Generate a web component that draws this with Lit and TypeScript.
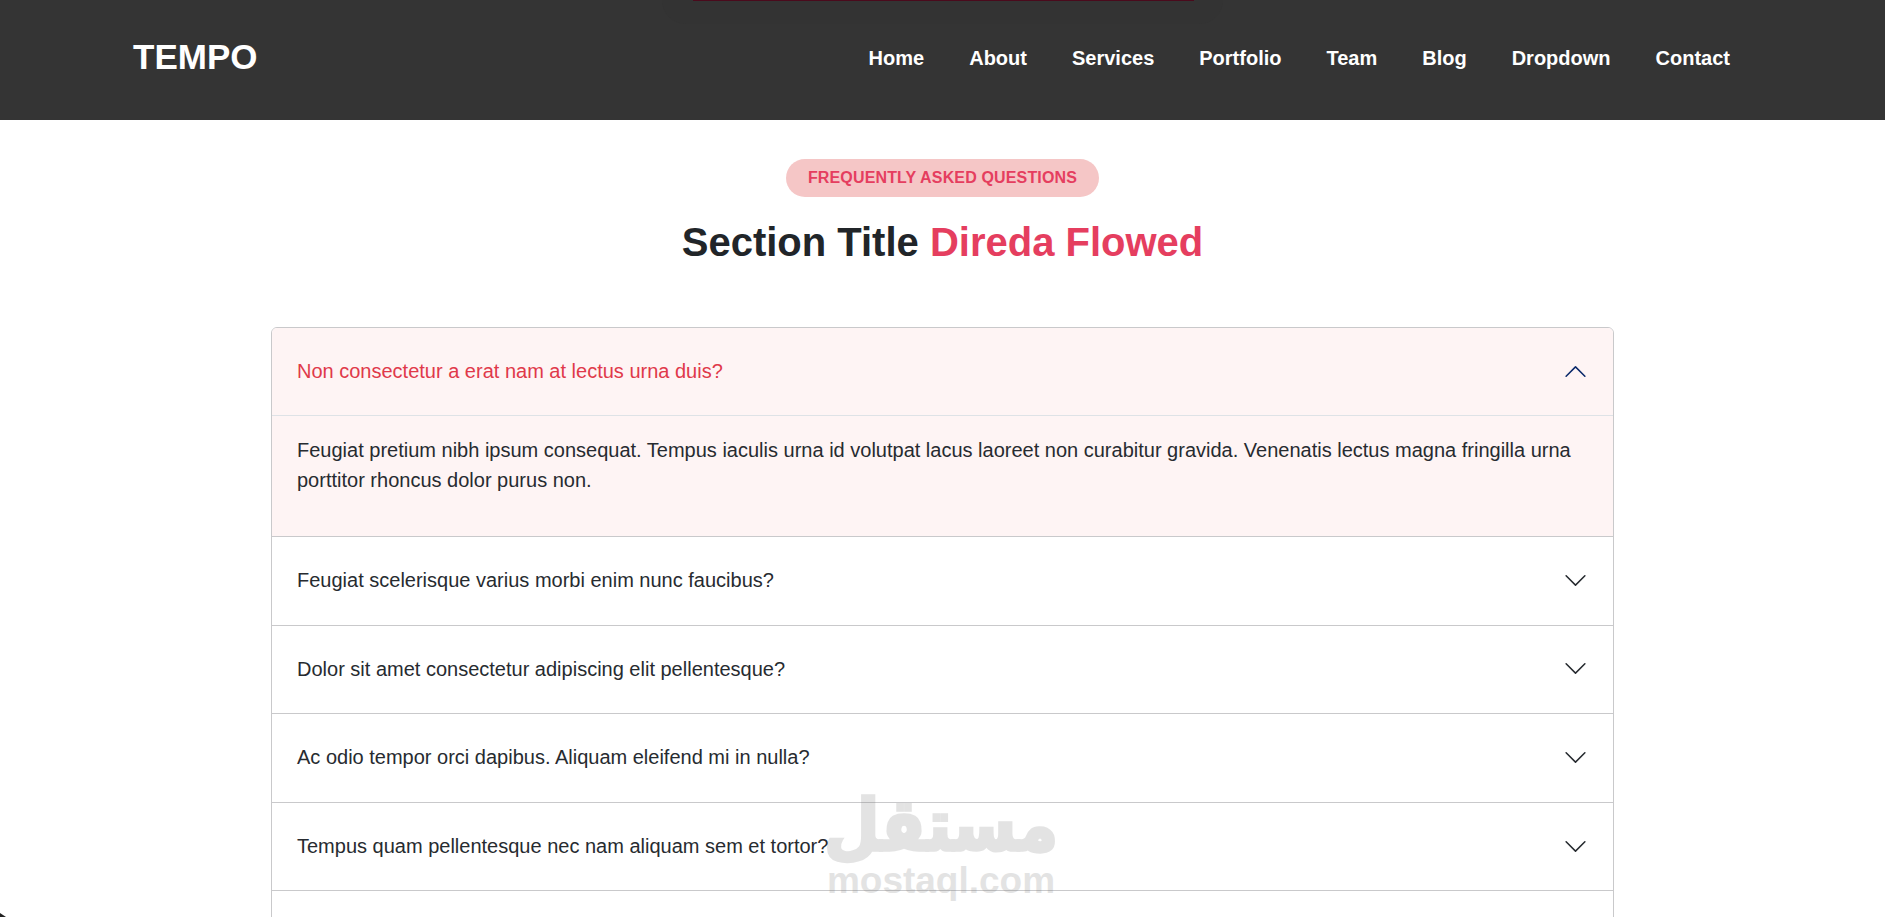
import { css, html, LitElement } from "lit";
import { customElement } from "lit/decorators.js";

const chevron = html`<svg class="chevron" viewBox="0 0 16 16" fill="currentColor">
	<path
		fill-rule="evenodd"
		d="M1.646 4.646a.5.5 0 0 1 .708 0L8 10.293l5.646-5.647a.5.5 0 0 1 .708.708l-6 6a.5.5 0 0 1-.708 0l-6-6a.5.5 0 0 1 0-.708z"
	/>
</svg>`;

const NAV = ["Home", "About", "Services", "Portfolio", "Team", "Blog", "Dropdown", "Contact"];

const QUESTIONS = [
	"Feugiat scelerisque varius morbi enim nunc faucibus?",
	"Dolor sit amet consectetur adipiscing elit pellentesque?",
	"Ac odio tempor orci dapibus. Aliquam eleifend mi in nulla?",
	"Tempus quam pellentesque nec nam aliquam sem et tortor?",
];

@customElement("app-root")
export class AppRoot extends LitElement {
	static override styles = css`
		:host {
			display: block;
			height: 100vh;
			overflow: hidden;
			position: relative;
			background: #fff;
			color: #272b30;
			font-family: "Liberation Sans", Arial, sans-serif;
			font-size: 20px;
		}

		.header {
			height: 120px;
			background: #343434;
			display: flex;
			align-items: center;
			justify-content: space-between;
			padding: 0 155px 4px 133px;
			box-sizing: border-box;
			position: relative;
		}

		.logo {
			font-size: 35px;
			font-weight: 700;
			color: #fff;
			margin-bottom: 3px;
		}

		.nav {
			display: flex;
			gap: 45px;
			font-size: 20px;
			font-weight: 700;
			color: #fff;
		}

		.top-strip {
			position: absolute;
			left: 693px;
			top: 0;
			width: 501px;
			height: 1px;
			background: #4a0a1c;
		}

		.top-shadow {
			position: absolute;
			left: 662px;
			top: 0;
			width: 561px;
			height: 24px;
			background: #333;
			border-radius: 0 0 24px 24px;
		}

		.section {
			display: flex;
			flex-direction: column;
			align-items: center;
			padding-top: 39px;
		}

		.badge {
			height: 38px;
			box-sizing: border-box;
			padding: 0 22px 1px;
			display: flex;
			align-items: center;
			border-radius: 19px;
			background: #f5c6c6;
			color: #e53e5f;
			font-size: 16px;
			font-weight: 700;
			letter-spacing: 0.15px;
		}

		.title {
			margin: 22px 0 0;
			font-size: 40px;
			line-height: 46px;
			font-weight: 700;
			color: #212529;
		}

		.title span {
			color: #e53e5f;
		}

		.accordion {
			width: 1343px;
			margin-top: 62px;
			box-sizing: border-box;
			border: 1px solid #c9c9cb;
			border-radius: 6px;
			overflow: hidden;
		}

		.question {
			height: 87px;
			display: flex;
			align-items: center;
			justify-content: space-between;
			padding: 0 25px;
		}

		.item {
			border-top: 1px solid #c9c9cb;
		}

		.item .question {
			height: 87.6px;
		}

		.open {
			background: #fef4f4;
		}

		.open .question {
			color: #e0394a;
			border-bottom: 1px solid #dee2e6;
		}

		.open .chevron {
			color: #0c2a6b;
			transform: rotate(180deg);
		}

		.answer {
			height: 120px;
			box-sizing: border-box;
			padding: 20px 25px 0;
			line-height: 29.5px;
		}

		.chevron {
			width: 25px;
			height: 25px;
			color: #272b30;
			flex: none;
			margin-bottom: 1px;
		}

		.watermark {
			position: absolute;
			left: 821px;
			top: 786px;
			width: 240px;
			display: flex;
			flex-direction: column;
			align-items: center;
			color: #777;
			opacity: 0.2;
			font-weight: 700;
			pointer-events: none;
		}

		.watermark .ar {
			font-family: "DejaVu Sans", sans-serif;
			font-size: 64px;
			line-height: 78px;
			-webkit-text-stroke: 3px #777;
			transform: scaleY(1.12);
		}

		.watermark .en {
			font-size: 37px;
			line-height: 34px;
		}

		.corner {
			position: absolute;
			left: 0;
			bottom: 0;
			width: 6px;
			height: 4px;
			background: #222;
			clip-path: polygon(0 0, 100% 100%, 0 100%);
		}
	`;

	override render() {
		return html`
			<header class="header">
				<div class="top-shadow"></div>
				<div class="top-strip"></div>
				<div class="logo">TEMPO</div>
				<nav class="nav">${NAV.map((n) => html`<span>${n}</span>`)}</nav>
			</header>
			<section class="section">
				<div class="badge">FREQUENTLY ASKED QUESTIONS</div>
				<h2 class="title">Section Title <span>Direda Flowed</span></h2>
				<div class="accordion">
					<div class="open">
						<div class="question">
							<span>Non consectetur a erat nam at lectus urna duis?</span>
							${chevron}
						</div>
						<div class="answer">
							Feugiat pretium nibh ipsum consequat. Tempus iaculis urna id volutpat lacus laoreet non curabitur gravida. Venenatis lectus magna fringilla urna porttitor rhoncus dolor purus non.
						</div>
					</div>
					${QUESTIONS.map(
						(q) => html`
							<div class="item">
								<div class="question"><span>${q}</span>${chevron}</div>
							</div>
						`,
					)}
					<div class="item"><div class="question"></div></div>
				</div>
			</section>
			<div class="watermark">
				<div class="ar">مستقل</div>
				<div class="en">mostaql.com</div>
			</div>
			<div class="corner"></div>
		`;
	}
}

declare global {
	interface HTMLElementTagNameMap {
		"app-root": AppRoot;
	}
}
